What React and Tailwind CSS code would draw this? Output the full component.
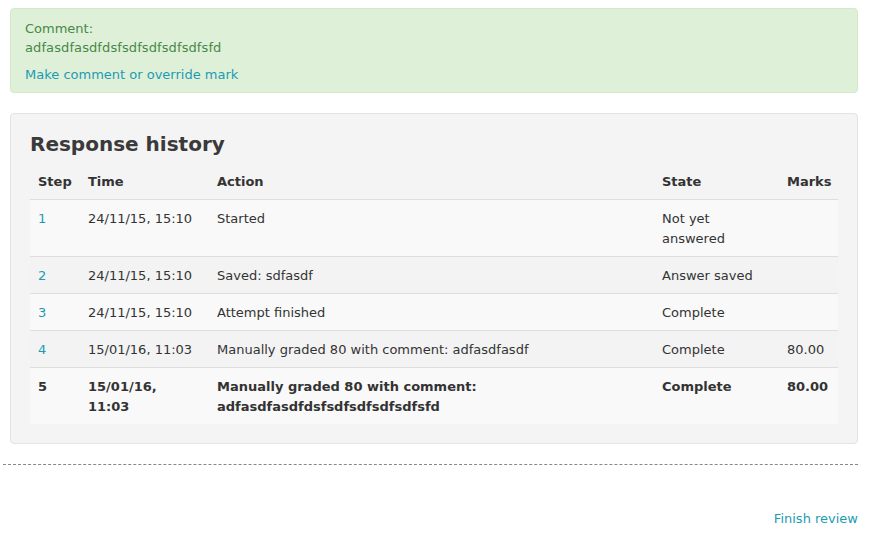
import React from "react";

const rows = [
  { step: "1", time: "24/11/15, 15:10", action: "Started", state: "Not yet answered", marks: "" },
  { step: "2", time: "24/11/15, 15:10", action: "Saved: sdfasdf", state: "Answer saved", marks: "" },
  { step: "3", time: "24/11/15, 15:10", action: "Attempt finished", state: "Complete", marks: "" },
  { step: "4", time: "15/01/16, 11:03", action: "Manually graded 80 with comment: adfasdfasdf", state: "Complete", marks: "80.00" },
];

export default function App() {
  const font = { fontFamily: '"DejaVu Sans", Verdana, sans-serif' };
  return (
    <div className="bg-white w-[879px] min-h-[549px] text-[13px] leading-[20px] text-[#333]" style={font}>
      <div className="pt-[8px] pl-[10px] w-[858px]">
        <div className="border border-[#d6e9c6] bg-[#dff0d8] rounded-[4px] pt-[10px] pb-[8px] pl-[14px] text-[#468847] leading-[19px]">
          <div className="mb-[8px]">
            <div>Comment:</div>
            <div className="tracking-[0.1px]">adfasdfasdfdsfsdfsdfsdfsdfsfd</div>
          </div>
          <div className="text-[#1c9bb3]">Make comment or override mark</div>
        </div>

        <div className="mt-[20px] border border-[#e3e3e3] bg-[#f4f4f4] rounded-[4px] px-[19px] pt-[18px] pb-[19px]">
          <h3 className="text-[20px] leading-[24px] font-bold text-[#3a3a3a] mb-[13px]">Response history</h3>
          <table className="w-full border-collapse table-fixed">
            <colgroup>
              <col className="w-[50px]" />
              <col className="w-[129px]" />
              <col className="w-[445px]" />
              <col className="w-[125px]" />
              <col />
            </colgroup>
            <thead>
              <tr className="border-b border-[#dddddd]">
                <th className="text-left font-bold px-[8px] pt-[3px] pb-[7px] align-bottom">Step</th>
                <th className="text-left font-bold px-[8px] pt-[3px] pb-[7px] align-bottom">Time</th>
                <th className="text-left font-bold px-[8px] pt-[3px] pb-[7px] align-bottom">Action</th>
                <th className="text-left font-bold px-[8px] pt-[3px] pb-[7px] align-bottom">State</th>
                <th className="text-left font-bold px-[8px] pt-[3px] pb-[7px] align-bottom">Marks</th>
              </tr>
            </thead>
            <tbody>
              {rows.map((r, i) => (
                <tr key={r.step} className={(i % 2 === 0 ? "bg-[#f9f9f9]" : "bg-[#f3f3f3]") + " border-b border-[#dddddd]"}>
                  <td className="px-[8px] pt-[9px] pb-[7px] align-top text-[#1c9bb3]">{r.step}</td>
                  <td className="px-[8px] pt-[9px] pb-[7px] align-top">{r.time}</td>
                  <td className="px-[8px] pt-[9px] pb-[7px] align-top">{r.action}</td>
                  <td className="px-[8px] pt-[9px] pb-[7px] align-top">{r.state === "Not yet answered" ? (<><div>Not yet</div><div>answered</div></>) : r.state}</td>
                  <td className="px-[8px] pt-[9px] pb-[7px] align-top">{r.marks}</td>
                </tr>
              ))}
              <tr className="bg-[#f9f9f9] font-bold">
                <td className="px-[8px] pt-[9px] pb-[7px] align-top">5</td>
                <td className="px-[8px] pt-[9px] pb-[7px] align-top"><div>15/01/16,</div><div>11:03</div></td>
                <td className="px-[8px] pt-[9px] pb-[7px] align-top"><div>Manually graded 80 with comment:</div><div>adfasdfasdfdsfsdfsdfsdfsdfsfd</div></td>
                <td className="px-[8px] pt-[9px] pb-[7px] align-top">Complete</td>
                <td className="px-[8px] pt-[9px] pb-[7px] align-top">80.00</td>
              </tr>
            </tbody>
          </table>
        </div>
      </div>

      <div className="mt-[20px] ml-[3px] w-[855px] border-t border-dashed border-[#888]"></div>

      <div className="w-[858px] flex justify-end mt-[44px]">
        <span className="text-[#1c9bb3]">Finish review</span>
      </div>
    </div>
  );
}
